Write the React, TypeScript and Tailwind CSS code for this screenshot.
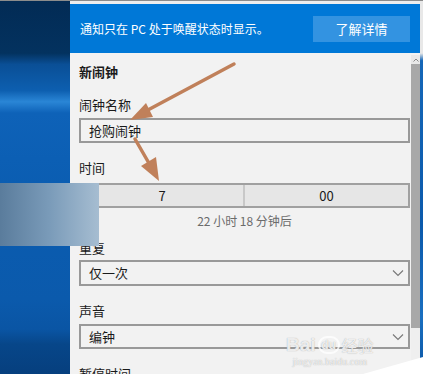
import React from "react";

const Chevron = () => (
  <svg width="12" height="8" viewBox="0 0 12 8" className="shrink-0">
    <path d="M1 1.5 L6 6.5 L11 1.5" fill="none" stroke="#7a7a7a" strokeWidth="1.2" />
  </svg>
);

export default function App() {
  return (
    <div
      className="relative w-[423px] h-[374px] overflow-hidden flex flex-col bg-[#0a56a8]"
      style={{ fontFamily: '"Noto Sans CJK SC", "Noto Sans", sans-serif' }}
    >
      <div className="h-[1px] bg-[#8c8c8c] shrink-0" />
      <div className="flex flex-1 min-h-0">
        {/* desktop left */}
        <div className="w-[70px] shrink-0 bg-[linear-gradient(180deg,#022b55_0%,#03325f_14%,#0a4f96_17%,#0d5fb0_24%,#2a86d6_27%,#0e62b8_30%,#0a5cb0_55%,#0b5aac_80%,#0a55a4_88%,#074689_92%,#063f7e_100%)]" />
        {/* panel */}
        <div className="w-[350px] shrink-0 flex flex-col bg-[#f2f2f2]">
          <div className="h-[3px] bg-[#eeeeee] shrink-0" />
          <div className="h-[49px] shrink-0 bg-[#0078d7] flex items-center justify-between pl-[10px] pr-[10px]">
            <span className="text-white text-[12px] leading-[18px]">通知只在 PC 处于唤醒状态时显示。</span>
            <div className="w-[97px] h-[26px] bg-[#3393e1] flex items-center justify-center text-white text-[13px]">
              了解详情
            </div>
          </div>
          <div className="flex flex-1 min-h-0">
            <div className="flex-1 flex flex-col pl-[9px] pr-[1px] text-[#1a1a1a] text-[13px]">
              <div className="shrink-0 mt-[10px] h-[18px] leading-[18px] font-bold">新闹钟</div>
              <div className="shrink-0 mt-[15px] h-[18px] leading-[18px]">闹钟名称</div>
              <div className="shrink-0 mt-[4px] h-[25px] border-2 border-[#999999] bg-[#f2f2f2] flex items-center pl-[8px] text-[13px]">
                抢购闹钟
              </div>
              <div className="shrink-0 mt-[16px] h-[18px] leading-[18px]">时间</div>
              <div className="shrink-0 mt-[6px] h-[25px] border-2 border-[#a0a0a0] bg-[#e6e6e6] flex text-[13px]">
                <div className="w-[164px] flex items-center justify-center border-r-2 border-[#c8c8c8]">7</div>
                <div className="flex-1 flex items-center justify-center">00</div>
              </div>
              <div className="shrink-0 mt-[4px] h-[18px] leading-[18px] text-center text-[12px] text-[#6b6b6b]">22 小时 18 分钟后</div>
              <div className="shrink-0 mt-[9px] h-[18px] leading-[18px]">重复</div>
              <div className="shrink-0 mt-[3px] h-[26px] border-2 border-[#999999] flex items-center justify-between pl-[8px] pr-[4px]">
                <span>仅一次</span>
                <Chevron />
              </div>
              <div className="shrink-0 mt-[16px] h-[18px] leading-[18px]">声音</div>
              <div className="shrink-0 mt-[4px] h-[25px] border-2 border-[#999999] flex items-center justify-between pl-[8px] pr-[4px]">
                <span>编钟</span>
                <Chevron />
              </div>
              <div className="shrink-0 mt-[16px] h-[18px] leading-[18px]">暂停时间</div>
            </div>
            {/* scrollbar */}
            <div className="w-[9px] shrink-0 flex flex-col pt-[2px]">
              <div className="h-[9px] bg-[#e8e8e8] flex items-center justify-center">
                <svg width="6" height="4" viewBox="0 0 6 4">
                  <path d="M0.5 3.5 L3 1 L5.5 3.5" fill="none" stroke="#8a8a8a" strokeWidth="1" />
                </svg>
              </div>
              <div className="h-[264px] bg-[#a8a8a8]" />
              <div className="flex-1 bg-[#efefef]" />
            </div>
          </div>
        </div>
        {/* desktop right */}
        <div className="flex-1 bg-[linear-gradient(180deg,#e8e8e8_0%,#e8e8e8_14%,#1567b8_16%,#0b5aac_60%,#1a6fc0_85%,#0a55a4_100%)]" />
      </div>

      {/* overlay gradient block */}
      <div className="absolute left-0 top-[183px] w-[99px] h-[63px] bg-[linear-gradient(90deg,#5a7c9c_0%,#7a9bb9_50%,#a6bdd1_100%)]" />

      {/* arrows */}
      <svg className="absolute left-0 top-0" width="423" height="374" viewBox="0 0 423 374">
        <line x1="234" y1="64" x2="146" y2="111" stroke="#c0805a" strokeWidth="3.5" strokeLinecap="round" />
        <polygon points="130,120 146,103 153,117" fill="#c0805a" />
        <line x1="135" y1="139" x2="150" y2="165" stroke="#c0805a" strokeWidth="3.5" strokeLinecap="round" />
        <polygon points="159,181 141,166 156,157" fill="#c0805a" />
        <polygon points="363,374 423,357 423,374" fill="#ffffff" />
      </svg>

      {/* watermark */}
      <div className="absolute left-[286px] top-[334px] flex flex-col items-center text-white/80 pointer-events-none" style={{ textShadow: "0 0 1px #9a9a9a" }}>
        <div className="flex items-center gap-[2px] text-[19px] leading-[22px] font-bold" style={{ fontFamily: '"Liberation Sans", "Noto Sans CJK SC", sans-serif' }}>
          <span>Bai</span>
          <span className="w-[22px] h-[18px] rounded-full border-2 border-white/80 text-[12px] leading-[14px] flex items-center justify-center">du</span>
          <span className="text-[16px] font-normal" style={{ fontFamily: '"Noto Sans CJK SC", sans-serif' }}>经验</span>
        </div>
        <div className="text-[10px] leading-[12px]" style={{ fontFamily: '"Liberation Serif", serif' }}>jingyan.baidu.com</div>
      </div>
    </div>
  );
}
